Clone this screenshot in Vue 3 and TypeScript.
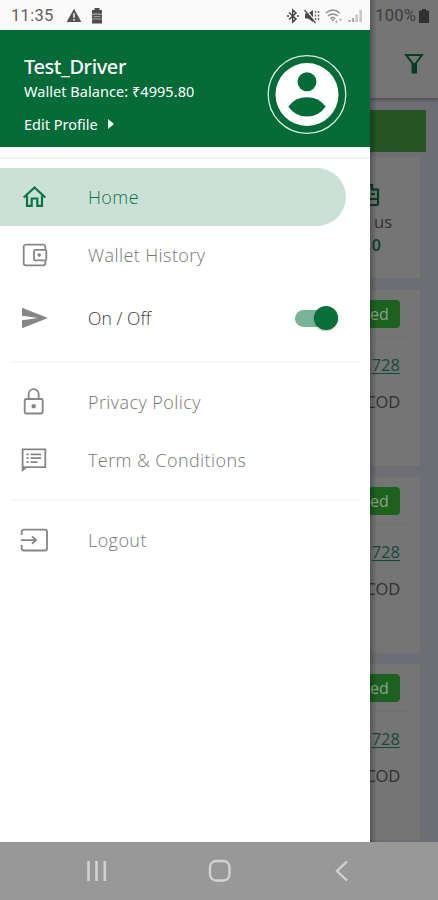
<script setup lang="ts">
interface MenuItem {
  label: string
  icon: 'home' | 'wallet' | 'send' | 'lock' | 'terms' | 'logout'
  kind?: 'active' | 'toggle'
}

const groups: MenuItem[][] = [
  [
    { label: 'Home', icon: 'home', kind: 'active' },
    { label: 'Wallet History', icon: 'wallet' },
    { label: 'On / Off', icon: 'send', kind: 'toggle' },
  ],
  [
    { label: 'Privacy Policy', icon: 'lock' },
    { label: 'Term & Conditions', icon: 'terms' },
  ],
  [{ label: 'Logout', icon: 'logout' }],
]

const orders = [
  { status: 'ed', id: '728', payment: 'COD' },
  { status: 'ed', id: '728', payment: 'COD' },
  { status: 'ed', id: '728', payment: 'COD' },
]
</script>

<template>
  <div class="phone">
    <div class="screen">
      <aside class="drawer">
        <div class="status">
          <span class="clock">11:35</span>
          <svg class="warn" viewBox="0 0 16 15" width="16" height="15">
            <path d="M8 .8 15.4 14H.6z" fill="#555" />
            <path d="M8 5.2v4.6M8 11v1.6" stroke="#fafafa" stroke-width="1.5" />
          </svg>
          <svg class="batt" viewBox="0 0 12 16" width="12" height="16">
            <path d="M3.5 0h5v2H11v13.6H1V2h2.500z" fill="#4c4c4c" />
            <path d="M1 6.200h10M1 11h10" stroke="#aaa" stroke-width="1.200" />
            <path d="M2.500 8.600h7" stroke="#999" stroke-width="1.300" />
          </svg>
          <div class="signals">
            <svg viewBox="0 0 12 16" width="12" height="16">
              <path d="M2 4.500 9 11 5.700 14V2L9 5 2 11.500" fill="none" stroke="#484848" stroke-width="1.500" />
              <path d="M0 8h2M10 8h2" stroke="#484848" stroke-width="1.500" />
            </svg>
            <svg viewBox="0 0 16 16" width="16" height="16">
              <path d="M1 5.500h3L9 2v12l-5-3.500H1z" fill="#4b4b4b" />
              <path d="m1 1 11 13" stroke="#fafafa" stroke-width="1.500" />
              <path d="m.5 2 11 13" stroke="#4b4b4b" stroke-width="1.300" />
              <path d="M11.500 3v10M14.500 3v10" stroke="#666" stroke-width="1.400" stroke-dasharray="2 1.500" />
            </svg>
            <svg class="wifi" viewBox="0 0 18 16" width="18" height="16">
              <path d="M.8 5q7-6 14 0M3 8q4.800-4 9.600 0M5.300 10.500q2.500-2 5 0" fill="none" stroke="#8f8f8f" stroke-width="1.400" />
              <path d="m6 11.300 1.800 2 1.800-2z" fill="#858585" />
              <path d="M11.500 12.500v2.500M15.500 10.500V13" stroke="#aaa" stroke-width="1.600" />
            </svg>
            <svg viewBox="0 0 15 14" width="15" height="14">
              <path d="M1.500 11v2M5 9v4" stroke="#aaa" stroke-width="2.200" />
              <path d="M8.700 5.500V13M12.700 1v12" stroke="#c8c8c8" stroke-width="2.600" />
            </svg>
          </div>
        </div>

        <header class="profile">
          <div class="who">
            <h1>Test_Driver</h1>
            <p class="balance">Wallet Balance: ₹4995.80</p>
            <p class="edit">
              <span>Edit Profile</span>
              <svg viewBox="0 0 6 10" width="6" height="10"><path d="m0 0 6 5-6 5z" fill="#fff" /></svg>
            </p>
          </div>
          <svg class="avatar" viewBox="0 0 80 80" width="80" height="80">
            <circle cx="40" cy="40.500" r="38.800" fill="none" stroke="#d9f0df" stroke-width="1.300" />
            <circle cx="40" cy="40.500" r="31.500" fill="#fff" />
            <circle cx="40" cy="27.800" r="9.500" fill="#036b37" />
            <path d="M21.300 52.500Q28 43.200 40 43.200T58.700 52.500Q52 62.500 40 62.500T21.300 52.500Z" fill="#036b37" />
          </svg>
        </header>

        <nav class="menu">
          <ul v-for="(group, g) in groups" :key="g" class="group">
            <li v-for="item in group" :key="item.label" class="row" :class="item.kind">
              <svg class="icon" viewBox="0 0 28 28" width="28" height="28" fill="none" stroke="currentColor" stroke-width="1.800">
                <template v-if="item.icon === 'home'">
                  <path d="M2.700 14.500 13.500 4.500l10.800 10" stroke-width="2.200" />
                  <path d="M6 12.500v10.300h4.700v-7.300h5.600v7.300H21V12.500" stroke-width="2.200" />
                </template>
                <template v-else-if="item.icon === 'wallet'">
                  <path d="M24.300 8.500V5.700a2 2 0 0 0-2-2H4.700a2 2 0 0 0-2 2v16.600a2 2 0 0 0 2 2h17.600a2 2 0 0 0 2-2v-2.800" />
                  <rect x="13" y="8.800" width="12.300" height="10.600" rx="1.500" />
                  <circle cx="18.200" cy="14.100" r="1.800" fill="currentColor" stroke="none" />
                </template>
                <path v-else-if="item.icon === 'send'" d="M1 3.700 27 14 1 24.300v-8L17 14 1 11.700z" fill="currentColor" stroke="none" />
                <template v-else-if="item.icon === 'lock'">
                  <rect x="4.700" y="11" width="18" height="14.500" rx="1.500" />
                  <path d="M8.700 10.800V6.200a5 5 0 0 1 10 0v4.600" />
                  <circle cx="13.700" cy="18.200" r="2.200" fill="currentColor" stroke="none" />
                </template>
                <template v-else-if="item.icon === 'terms'">
                  <path d="M2.600 24V3.300h22.700v17.900H6z" />
                  <path d="M2 19.500v6l5-4.300z" fill="currentColor" stroke="none" />
                  <path d="M6.500 8.300h2.200M10.500 8.300h10.500M6.500 12.200h2.200M10.500 12.200h10.500M6.500 16.100h2.200M10.500 16.100h7" stroke-width="1.700" />
                </template>
                <template v-else>
                  <path d="M1.700 9V5.700a2 2 0 0 1 2-2H25a2 2 0 0 1 2 2v16.800a2 2 0 0 1-2 2H3.700a2 2 0 0 1-2-2V19" />
                  <path d="M.8 14.100h14.700M12 10.300l4 3.800-4 3.800" />
                </template>
              </svg>
              <span class="label" :class="item.icon">{{ item.label }}</span>
              <span v-if="item.kind === 'toggle'" class="switch"><i></i></span>
            </li>
          </ul>
        </nav>
      </aside>

      <main class="behind">
        <div class="behind-status">
          <span>100%</span>
          <svg viewBox="0 0 10 14" width="10" height="14"><path d="M3 0h4v1.500h3V14H0V1.500h3z" fill="#303030" /></svg>
        </div>
        <div class="toolbar">
          <svg viewBox="0 0 20 22" width="20" height="22">
            <path d="M2 2h16l-6 8v9.500H8.500V10z" fill="none" stroke="#053e23" stroke-width="2" />
            <path d="M8 10h4.500v9.500H8z" fill="#053e23" />
          </svg>
        </div>
        <div class="banner"></div>
        <section class="card bonus">
          <svg viewBox="0 0 10 24" width="10" height="24" fill="none" stroke="#053e23" stroke-width="2.200">
            <path d="M0 2h2v4.500h6v14a1.500 1.500 0 0 1-1.500 1.500H0M0 16h8M1 11h4" />
          </svg>
          <span class="caption">us</span>
          <b>0</b>
        </section>
        <section v-for="(order, i) in orders" :key="i" class="card order">
          <span class="badge">{{ order.status }}</span>
          <span class="rule"></span>
          <a>{{ order.id }}</a>
          <span class="pay">{{ order.payment }}</span>
        </section>
      </main>
    </div>

    <footer class="navbar">
      <svg viewBox="0 0 22 22" width="22" height="22"><path d="M2.500 1v20M10.500 1v20M18.800 1v20" stroke="#d2d2d2" stroke-width="2.600" /></svg>
      <svg viewBox="0 0 24 24" width="24" height="24"><rect x="2" y="2" width="19.500" height="19.500" rx="6" fill="none" stroke="#d2d2d2" stroke-width="2.400" /></svg>
      <svg viewBox="0 0 14 22" width="14" height="22"><path d="M12 1.500 2 11l10 9.500" fill="none" stroke="#d2d2d2" stroke-width="2.300" /></svg>
    </footer>
  </div>
</template>

<style>
body {
  margin: 0;
}
</style>

<style scoped>
.phone {
  width: 438px;
  height: 900px;
  display: flex;
  flex-direction: column;
  overflow: hidden;
  font-family: 'Open Sans', 'Noto Sans', sans-serif;
}
svg {
  display: block;
  flex: none;
}
h1,
p,
ul {
  margin: 0;
  padding: 0;
}
.screen {
  height: 842px;
  display: grid;
  grid-template-columns: 370px 68px;
}
.drawer {
  background: #fff;
  min-width: 0;
}
.status {
  height: 30px;
  box-sizing: border-box;
  padding: 1px 7px 0 11px;
  background: #fafafa;
  display: flex;
  align-items: center;
}
.clock {
  width: 55px;
  font: 400 16.500px Roboto, sans-serif;
  letter-spacing: 0.300px;
  color: #606060;
}
.batt {
  margin-left: 9px;
}
.signals {
  margin-left: auto;
  display: flex;
  align-items: center;
  gap: 5px;
}
.profile {
  height: 117px;
  box-sizing: border-box;
  padding: 24px 23px 0 24px;
  background: #036b37;
  color: #fff;
  display: flex;
  justify-content: space-between;
  white-space: nowrap;
}
.who {
  font-family: 'Noto Sans', sans-serif;
}
h1 {
  font-size: 20px;
  line-height: 26px;
  font-weight: 500;
  letter-spacing: -0.400px;
}
.balance {
  font-size: 14.500px;
  line-height: 22px;
  letter-spacing: 0.050px;
}
.edit {
  margin-top: 11px;
  font-size: 14.500px;
  line-height: 22px;
  display: flex;
  align-items: center;
  gap: 10px;
}
.menu {
  margin-top: 10px;
  border-top: 2px solid #f4f4f4;
}
.group {
  list-style: none;
  display: flex;
  flex-direction: column;
  box-sizing: border-box;
}
.group:nth-child(1) {
  padding-top: 9px;
  height: 202px;
}
.group:nth-child(2) {
  height: 138px;
  padding-top: 10px;
}
.group:nth-child(3) {
  padding-top: 10px;
}
.group + .group {
  border-top: 2px solid #f6f6f6;
  margin: 0 9px 0 12px;
}
.group + .group .row {
  padding-left: 8px;
}
.group + .group .icon {
  margin-right: 40px;
}
.row {
  height: 58px;
  box-sizing: border-box;
  display: flex;
  align-items: center;
  padding-left: 21px;
  color: #868686;
}
.icon {
  margin-right: 39px;
  width: 28px;
}
.label {
  font-size: 18px;
  font-weight: 300;
  letter-spacing: 0.420px;
  line-height: 26px;
  white-space: nowrap;
  color: #777;
}
.active {
  width: 346px;
  height: 58px;
  border-radius: 0 29px 29px 0;
  background: #cbe1d8;
  color: #0a7540;
}
.active .label {
  color: #0a7540;
}
.toggle {
  height: 68px;
}
.toggle .label {
  color: #3b3b3b;
  font-size: 17.500px;
  letter-spacing: 0.050px;
}
.switch {
  width: 43px;
  height: 17px;
  margin: 0 32px 0 auto;
  border-radius: 9px;
  background: #78b497;
  display: flex;
  align-items: center;
  justify-content: flex-end;
}
.switch i {
  width: 24px;
  height: 24px;
  flex: none;
  border-radius: 50%;
  background: #057039;
  box-shadow: 0 1px 2px #0004;
}
.behind {
  position: relative;
  background: #6c6e74;
  overflow: hidden;
}
.behind::after {
  content: '';
  position: absolute;
  inset: 0 auto 0 0;
  width: 7px;
  background: linear-gradient(90deg, #0004, #0000);
}
.behind-status {
  height: 30px;
  padding: 1px 9px 0 0;
  box-sizing: border-box;
  background: #757575;
  display: flex;
  align-items: center;
  justify-content: flex-end;
  gap: 3px;
  font: 400 16.500px Roboto, sans-serif;
  letter-spacing: 0.200px;
  color: #3c3c3c;
}
.toolbar {
  height: 68px;
  box-sizing: border-box;
  padding: 23px 14px 0 0;
  background: #757575;
  display: flex;
  justify-content: flex-end;
  box-shadow: 0 2px 3px #0004;
}
.banner {
  width: 56px;
  height: 42px;
  margin-top: 12px;
  background: #245522;
}
.card {
  width: 50px;
  box-sizing: border-box;
  background: #757575;
  display: flex;
  flex-direction: column;
  align-items: flex-end;
}
.bonus {
  height: 121px;
  margin: 5px 0 12px;
  padding: 26px 40px 0 0;
}
.caption {
  margin: 2px -12px 0 0;
  font-size: 16.500px;
  line-height: 26px;
  color: #303030;
}
.bonus b {
  margin-right: -1px;
  font-size: 16px;
  line-height: 20px;
  font-weight: 600;
  color: #083e28;
}
.order {
  height: 176px;
  padding: 10px 20px 0 0;
  margin-bottom: 11px;
}
.badge {
  width: 30px;
  box-sizing: border-box;
  padding-right: 12px;
  text-align: right;
  border-radius: 0 4px 4px 0;
  background: #1c621f;
  color: #8da38b;
  font-size: 16px;
  line-height: 28px;
}
.rule {
  width: 40px;
  height: 1px;
  margin: 9px -10px 0 0;
  background: #707070;
}
.order a {
  margin-top: 15px;
  font-size: 16.500px;
  line-height: 24px;
  color: #15483a;
  text-decoration: underline;
  text-underline-offset: 2px;
  text-decoration-thickness: 1px;
}
.pay {
  margin-top: 13px;
  font-size: 16.500px;
  letter-spacing: -0.200px;
  line-height: 24px;
  color: #303030;
}
.navbar {
  height: 58px;
  box-sizing: border-box;
  padding: 0 89px 0 86px;
  background: #989898;
  display: grid;
  grid-template-columns: 122px 127px 14px;
  align-items: center;
}
</style>
